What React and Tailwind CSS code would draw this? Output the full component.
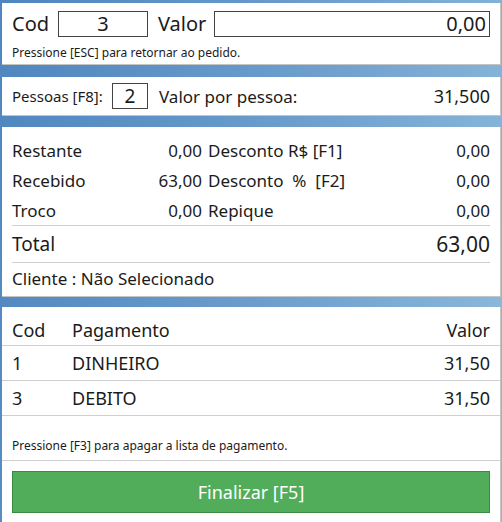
import React from "react";

const F = { fontFamily: '"Segoe UI", "Noto Sans", "Open Sans", sans-serif' };

export default function App() {
  return (
    <div
      style={F}
      className="w-[502px] h-[522px] overflow-hidden bg-[linear-gradient(100deg,#4f86bf_0%,#6a9ccc_50%,#8ebbdc_100%)] pl-[2px] pr-[1px] pt-[3px] flex flex-col text-[#1b1b1b]"
    >
      {/* Panel 1 */}
      <div className="bg-white border-r border-b border-[#c4c4c4] h-[62px] flex flex-col px-[10px] pt-[8px]">
        <div className="flex items-center h-[26px]">
          <span className="text-[20px] leading-none w-[46px]">Cod</span>
          <div className="w-[90px] h-[26px] border border-[#444] flex items-center justify-center text-[20px] leading-none">3</div>
          <span className="text-[20px] leading-none ml-[10px] w-[56px]">Valor</span>
          <div className="flex-1 h-[26px] border border-[#444] flex items-center justify-end pr-[3px] text-[20px] leading-none">0,00</div>
        </div>
        <div className="text-[12px] leading-none mt-[10px]">Pressione [ESC] para retornar ao pedido.</div>
      </div>

      {/* Panel 2 */}
      <div className="mt-[12px] bg-white border-r border-b border-[#c4c4c4] h-[39px] flex items-center px-[10px]">
        <span className="text-[15px] leading-none w-[100px]">Pessoas [F8]:</span>
        <div className="w-[36px] h-[26px] border border-[#444] flex items-center justify-center text-[19px] leading-none">2</div>
        <span className="text-[17px] leading-none ml-[11px]">Valor por pessoa:</span>
        <span className="ml-auto text-[18px] leading-none">31,500</span>
      </div>

      {/* Panel 3 */}
      <div className="mt-[11px] bg-white border-r border-b border-[#c4c4c4] h-[170px] flex flex-col px-[10px] pt-[8px]">
        {[
          ["Restante", "0,00", "Desconto R$ [F1]", "0,00"],
          ["Recebido", "63,00", "Desconto  %  [F2]", "0,00"],
          ["Troco", "0,00", "Repique", "0,00"],
        ].map(([a, b, c, d]) => (
          <div key={a} className="flex items-center h-[30px] text-[17px] leading-none">
            <span className="w-[120px]">{a}</span>
            <span className="w-[70px] text-right">{b}</span>
            <span className="ml-[6px] whitespace-pre">{c}</span>
            <span className="ml-auto">{d}</span>
          </div>
        ))}
        <div className="border-t border-[#cfcfcf] h-[37px] flex items-center">
          <span className="text-[19px] leading-none">Total</span>
          <span className="ml-auto text-[21px] leading-none">63,00</span>
        </div>
        <div className="border-t border-[#cfcfcf] h-[32px] flex items-center text-[17px] leading-none">
          Cliente : Não Selecionado
        </div>
      </div>

      {/* Panel 4 */}
      <div className="mt-[10px] bg-white border-r border-[#c4c4c4] flex-1 flex flex-col">
        <div className="h-[38px] flex items-center px-[10px] text-[18px] leading-none pt-[8px]">
          <span className="w-[60px]">Cod</span>
          <span>Pagamento</span>
          <span className="ml-auto">Valor</span>
        </div>
        {[
          ["1", "DINHEIRO", "31,50"],
          ["3", "DEBITO", "31,50"],
        ].map(([a, b, c]) => (
          <div key={b} className="border-t border-[#cfcfcf] h-[35px] flex items-center px-[10px] text-[18px] leading-none">
            <span className="w-[60px]">{a}</span>
            <span>{b}</span>
            <span className="ml-auto">{c}</span>
          </div>
        ))}
        <div className="border-t border-[#cfcfcf] h-[45px] flex items-end pb-[8px] px-[10px] text-[12px] leading-none">
          Pressione [F3] para apagar a lista de pagamento.
        </div>
        <div className="border-t border-[#cfcfcf] px-[10px] pt-[10px]">
          <div className="h-[42px] bg-[#52ad5b] border border-[#3b8a41] flex items-center justify-center text-white text-[18px] leading-none">
            Finalizar [F5]
          </div>
        </div>
      </div>
    </div>
  );
}
